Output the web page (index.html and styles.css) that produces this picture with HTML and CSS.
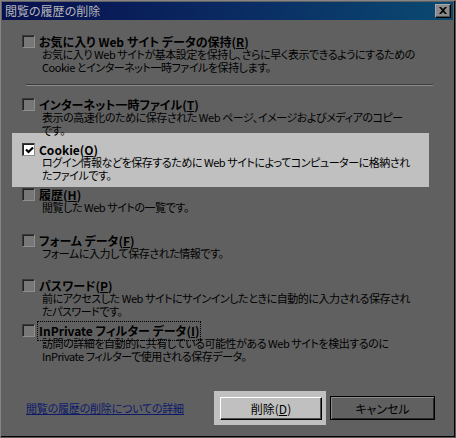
FILE: index.html
```html
<!DOCTYPE html>
<html lang="ja">
<head>
<meta charset="utf-8">
<title>閲覧の履歴の削除</title>
<link rel="stylesheet" href="styles.css">
</head>
<body>
<div class="window">
  <div class="titlebar">
    <span class="title">閲覧の履歴の削除</span>
    <span class="close">
      <svg width="8" height="7" viewBox="0 0 8 7"><path d="M0 0h2l2 2 2-2h2L5 3.5 8 7H6L4 5 2 7H0l3-3.5z" fill="#000"/></svg>
    </span>
  </div>
  <div class="content">
    <div class="item first">
      <span class="box"></span>
      <div class="label">お気に入り Web サイト データの保持(<u>R</u>)</div>
      <div class="desc">お気に入り Web サイトが基本設定を保持し、さらに早く表示できるようにするための<br>Cookie とインターネット一時ファイルを保持します。</div>
    </div>
    <div class="sep"></div>
    <div class="items">
      <div class="item">
        <span class="box"></span>
        <div class="label">インターネット一時ファイル(<u>T</u>)</div>
        <div class="desc">表示の高速化のために保存された Web ページ、イメージおよびメディアのコピー<br>です。</div>
      </div>
      <div class="item selected">
        <span class="box checked">
          <svg width="9" height="9" viewBox="0 0 9 9"><path d="M1 3.5l2.5 2.5L8 1.5" fill="none" stroke="#000" stroke-width="2.2"/></svg>
        </span>
        <div class="label">Cookie(<u>O</u>)</div>
        <div class="desc">ログイン情報などを保存するために Web サイトによってコンピューターに格納され<br>たファイルです。</div>
      </div>
      <div class="item">
        <span class="box"></span>
        <div class="label">履歴(<u>H</u>)</div>
        <div class="desc">閲覧した Web サイトの一覧です。</div>
      </div>
      <div class="item">
        <span class="box"></span>
        <div class="label">フォーム データ(<u>F</u>)</div>
        <div class="desc">フォームに入力して保存された情報です。</div>
      </div>
      <div class="item">
        <span class="box"></span>
        <div class="label">パスワード(<u>P</u>)</div>
        <div class="desc">前にアクセスした Web サイトにサインインしたときに自動的に入力される保存され<br>たパスワードです。</div>
      </div>
      <div class="item">
        <span class="box"></span>
        <div class="label"><span class="focus">InPrivate フィルター データ(<u>I</u>)</span></div>
        <div class="desc">訪問の詳細を自動的に共有している可能性がある Web サイトを検出するのに<br>InPrivate フィルターで使用される保存データ。</div>
      </div>
    </div>
    <div class="footer">
      <a class="link" href="#">閲覧の履歴の削除についての詳細</a>
      <div class="default-wrap"><button class="btn default">削除(<u>D</u>)</button></div>
      <button class="btn cancel">キャンセル</button>
    </div>
  </div>
</div>
</body>
</html>
```

FILE: styles.css
```css
* { box-sizing: border-box; }
html, body { margin: 0; padding: 0; background: #606060; }
body {
  font-family: "Noto Sans CJK JP", "Noto Sans", sans-serif;
  font-size: 12px;
  line-height: 13px;
  color: #000;
  font-feature-settings: "palt";
}
.window {
  width: 456px;
  height: 438px;
  background: #606060;
  border-top: 1px solid #858585;
  border-left: 1px solid #858585;
  border-right: 1px solid #5a5a5a;
  border-bottom: 1px solid #5a5a5a;
  padding: 1px 2px 2px 1px;
  box-shadow: inset -1px -1px 0 #000;
  display: flex;
  flex-direction: column;
}
.titlebar {
  height: 18px;
  background: linear-gradient(to right, #08104f 0%, #0a2a62 50%, #0a4a72 100%);
  display: flex;
  align-items: center;
  justify-content: space-between;
  padding: 0 1px 0 3px;
}
.title {
  color: #b8b8b8;
  font-size: 12px;
  line-height: 14px;
}
.close {
  width: 16px;
  height: 14px;
  background: #8a8a8a;
  border-top: 1px solid #a8a8a8;
  border-left: 1px solid #a8a8a8;
  border-right: 1px solid #000;
  border-bottom: 1px solid #000;
  box-shadow: inset -1px -1px 0 #505050;
  display: flex;
  align-items: center;
  justify-content: center;
  margin-right: 1px;
}
.close svg { display: block; margin: 0 1px 1px 0; }
.content {
  flex: 1;
  padding-top: 15px;
  display: flex;
  flex-direction: column;
}
.item {
  display: grid;
  grid-template-columns: 13px auto;
  grid-template-rows: 13px auto;
  align-content: start;
  column-gap: 4px;
  margin-left: 20px;
  white-space: nowrap;
  position: relative;
}
.box {
  grid-row: 1;
  grid-column: 1;
  width: 13px;
  height: 13px;
  background: #777;
  border-top: 1px solid #3a3a3a;
  border-left: 1px solid #3a3a3a;
  border-right: 1px solid #8e8e8e;
  border-bottom: 1px solid #8e8e8e;
  box-shadow: inset 1px 1px 0 #222;
  display: flex;
  align-items: center;
  justify-content: center;
}
.box.checked { background: #fff; }
.box svg { display: block; margin: 1px 0 0 1px; }
.label {
  grid-row: 1;
  grid-column: 2;
  font-weight: bold;
  line-height: 13px;
}
.desc {
  grid-row: 2;
  grid-column: 2;
  padding-left: 3px;
  font-size: 11px;
  letter-spacing: -0.45px;
  line-height: 13px;
}
.sep {
  margin: 10px 0 12px 24px;
  width: 407px;
  height: 2px;
  border-top: 1px solid #3c3c3c;
  border-bottom: 1px solid #8c8c8c;
}
.items {
  display: grid;
  grid-template-rows: 45px 45px 46px 45px 45px 45px;
  position: relative;
  z-index: 0;
}
.selected::before {
  content: "";
  position: absolute;
  left: -10px;
  top: -10px;
  width: 417px;
  height: 54px;
  background: #c0c0c0;
  z-index: -1;
}
.focus {
  outline: 1px dotted #000;
  outline-offset: 0;
  padding: 0 1px 1px;
  margin-left: -1px;
}
.footer {
  margin-top: 22px;
  display: flex;
  align-items: center;
}
.link {
  margin-left: 24px;
  color: #0c1a6c;
  text-decoration: underline;
  font-size: 11px;
  letter-spacing: -0.2px;
  width: 188px;
}
.default-wrap {
  background: #c0c0c0;
  padding: 6px 4px 5px 6px;
}
.btn {
  font-family: inherit;
  font-size: 12px;
  line-height: 13px;
  color: #000;
  height: 23px;
  padding: 0;
  margin: 0;
  font-feature-settings: "palt";
}
.btn.default {
  display: block;
  width: 102px;
  background: #c0c0c0;
  border-top: 1px solid #fff;
  border-left: 1px solid #fff;
  border-right: 1px solid #000;
  border-bottom: 1px solid #000;
  box-shadow: inset -1px -1px 0 #505050;
}
.btn.cancel {
  margin-left: 4px;
  width: 105px;
  height: 24px;
  background: #606060;
  border: 1px solid #000;
  box-shadow: inset 1px 1px 0 #8a8a8a, inset -1px -1px 0 #2a2a2a;
}
```
